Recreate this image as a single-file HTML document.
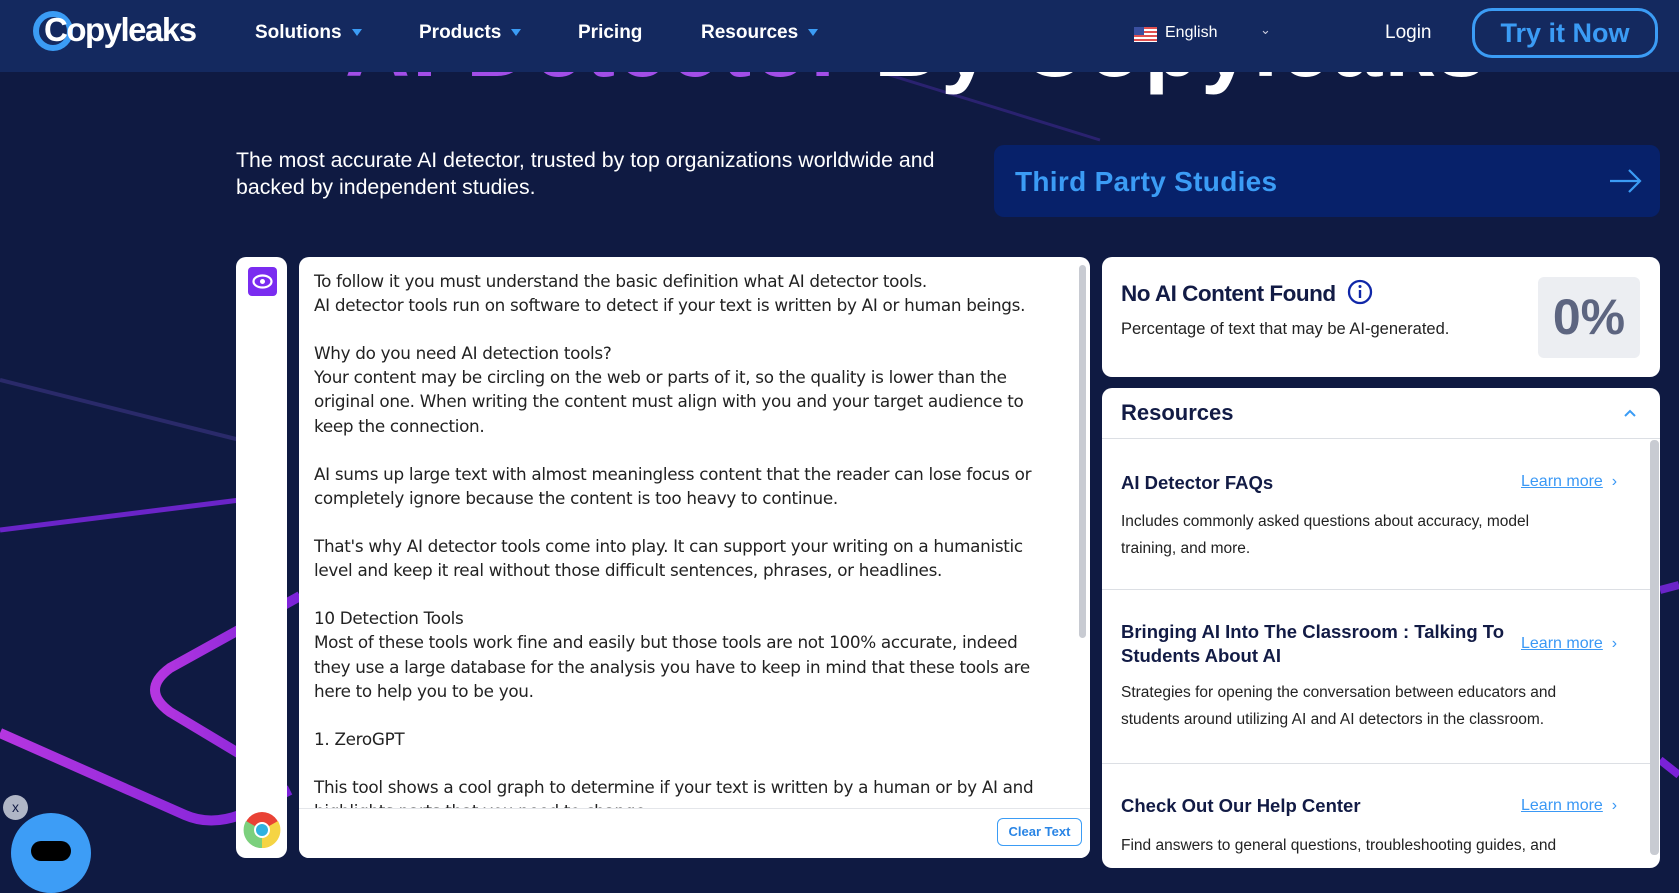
<!DOCTYPE html>
<html><head><meta charset="utf-8"><style>
*{margin:0;padding:0;box-sizing:border-box}
body{width:1679px;height:858px;overflow:hidden;background:#0f1a42;font-family:"Liberation Sans",sans-serif;position:relative}
.abs{position:absolute}
.hdr{left:0;top:0;width:1679px;height:72px;background:#14295f;z-index:5}
.nav{color:#fff;font-weight:bold;font-size:19px;top:22px}
.tri{display:inline-block;width:0;height:0;border-left:5px solid transparent;border-right:5px solid transparent;border-top:7px solid #3b9cf5;margin-left:10px;vertical-align:middle}
.card{background:#fff;border-radius:10px}
.ed{font-size:16.8px;line-height:24.1px;color:#222;white-space:pre-wrap;font-family:"DejaVu Sans","Liberation Sans",sans-serif;letter-spacing:-0.3px}
.rt{color:#121b45;font-weight:bold;font-size:18.5px}
.rd{color:#222;font-size:15.5px;line-height:26.5px}
.lm{color:#3a98f5;font-size:16px}
.lm u{text-decoration:underline}
</style></head><body>
<svg class="abs" style="left:0;top:0" width="1679" height="858">
<defs><linearGradient id="g" x1="0" x2="1"><stop offset="0" stop-color="#b536e0"/><stop offset="1" stop-color="#7a22d8"/></linearGradient></defs>
<path d="M0 733 L185 815 Q210 826 240 815 L290 790" stroke="url(#g)" stroke-width="10" fill="none"/>
<path d="M300 596 L170 668 Q140 690 170 712 L250 760" stroke="url(#g)" stroke-width="10" fill="none"/>
<path d="M0 380 L240 440" stroke="#2a2a6a" stroke-width="4" fill="none"/>
<path d="M0 530 L240 500" stroke="#6a24c8" stroke-width="5" fill="none"/>
<path d="M1660 590 L1679 585" stroke="#6a24c8" stroke-width="8"/>
<path d="M1660 760 L1679 775" stroke="#7a22d8" stroke-width="8"/>
<path d="M880 72 L1100 140" stroke="#2a2270" stroke-width="3"/>
</svg>
<div class="abs" style="left:345px;top:-4px;font-size:90px;line-height:100px;font-weight:bold;color:#fff;white-space:nowrap;letter-spacing:2px"><span style="color:#a24ee8">AI Detector</span> By Copyleaks</div>
<div class="abs hdr">
 <svg class="abs" style="left:32px;top:10px" width="46" height="42"><circle cx="21" cy="21" r="17" stroke="#3b9cf5" stroke-width="6" fill="none"/></svg>
 <div class="abs" style="left:44px;top:11px;font-size:33px;color:#fff;font-weight:bold;letter-spacing:-1.5px">Copyleaks</div>
 <div class="abs nav" style="left:255px">Solutions<span class="tri"></span></div>
 <div class="abs nav" style="left:419px">Products<span class="tri"></span></div>
 <div class="abs nav" style="left:578px">Pricing</div>
 <div class="abs nav" style="left:701px">Resources<span class="tri"></span></div>
 <div class="abs" style="left:1134px;top:27px;width:23px;height:15px;background:repeating-linear-gradient(#e05050 0 2px,#fff 2px 4px)"><div style="width:10px;height:8px;background:#3a4fa0"></div></div>
 <div class="abs" style="left:1165px;top:24px;color:#fff;font-size:16px">English</div>
 <div class="abs" style="left:1260px;top:22px;color:#ccd;font-size:13px">&#8964;</div>
 <div class="abs" style="left:1385px;top:22px;color:#fff;font-size:19px">Login</div>
 <div class="abs" style="left:1472px;top:8px;width:186px;height:50px;border:3px solid #3b9cf5;border-radius:20px;color:#3b9cf5;font-weight:bold;font-size:27px;text-align:center;line-height:44px">Try it Now</div>
</div>
<div class="abs" style="left:236px;top:147px;color:#fff;font-size:21.3px;line-height:27px">The most accurate AI detector, trusted by top organizations worldwide and<br>backed by independent studies.</div>
<div class="abs" style="left:994px;top:145px;width:666px;height:72px;background:#07216a;border-radius:10px">
 <div class="abs" style="left:21px;top:21px;color:#3b9cf5;font-weight:bold;font-size:28px;letter-spacing:0.3px">Third Party Studies</div>
 <svg class="abs" style="left:614px;top:22px" width="36" height="28"><path d="M2 14 H32 M21 3 L32 14 L21 25" stroke="#3b9cf5" stroke-width="2.2" fill="none"/></svg>
</div>
<div class="abs card" style="left:236px;top:257px;width:51px;height:601px">
 <div class="abs" style="left:12px;top:10px;width:29px;height:29px;background:#7a2cf0;border-radius:4px"><svg width="29" height="29"><ellipse cx="14.5" cy="14.5" rx="9" ry="6" stroke="#fff" stroke-width="2.2" fill="none"/><circle cx="14.5" cy="14.5" r="2.5" fill="#fff"/></svg></div>
 <svg class="abs" style="left:7px;top:554px" width="38" height="38"><circle cx="19" cy="19" r="18" fill="#e94235"/><path d="M19 19 L3 10 A18 18 0 0 0 19 37 Z" fill="#7bd07d"/><path d="M19 19 L19 37 A18 18 0 0 0 35 10 Z" fill="#f5d444"/><circle cx="19" cy="19" r="8" fill="#fff"/><circle cx="19" cy="19" r="6" fill="#2fb2e0"/></svg>
</div>
<div class="abs card" style="left:299px;top:257px;width:791px;height:601px;overflow:hidden">
 <div class="abs ed" style="left:15px;top:12px;width:750px">To follow it you must understand the basic definition what AI detector tools.
AI detector tools run on software to detect if your text is written by AI or human beings.

Why do you need AI detection tools?
Your content may be circling on the web or parts of it, so the quality is lower than the
original one. When writing the content must align with you and your target audience to
keep the connection.

AI sums up large text with almost meaningless content that the reader can lose focus or
completely ignore because the content is too heavy to continue.

That's why AI detector tools come into play. It can support your writing on a humanistic
level and keep it real without those difficult sentences, phrases, or headlines.

10 Detection Tools
Most of these tools work fine and easily but those tools are not 100% accurate, indeed
they use a large database for the analysis you have to keep in mind that these tools are
here to help you to be you.

1. ZeroGPT

This tool shows a cool graph to determine if your text is written by a human or by AI and
highlights parts that you need to change.</div>
 <div class="abs" style="left:780px;top:8px;width:7px;height:373px;background:#c8cbd2;border-radius:4px"></div>
 <div class="abs" style="left:0;top:551px;width:791px;height:50px;background:#fff;border-top:1px solid #e4e6ea"></div>
 <div class="abs" style="left:698px;top:561px;width:85px;height:28px;border:1.5px solid #3b9cf5;border-radius:6px;color:#2a85e5;font-size:13px;font-weight:bold;text-align:center;line-height:25px">Clear Text</div>
</div>
<div class="abs card" style="left:1102px;top:257px;width:558px;height:120px">
 <div class="abs" style="left:19px;top:22px;font-size:22.5px;font-weight:bold;color:#121b45;letter-spacing:-0.5px;white-space:nowrap">No AI Content Found <svg style="vertical-align:-4px;margin-left:6px" width="26" height="26"><circle cx="13" cy="13" r="11" stroke="#1027a8" stroke-width="2.3" fill="none"/><rect x="11.8" y="11" width="2.4" height="8" fill="#1027a8"/><circle cx="13" cy="7.5" r="1.5" fill="#1027a8"/></svg></div>
 <div class="abs" style="left:19px;top:63px;font-size:16.5px;color:#222">Percentage of text that may be AI-generated.</div>
 <div class="abs" style="left:436px;top:20px;width:102px;height:81px;background:#eceef2;border-radius:6px;color:#5d6580;font-weight:bold;font-size:50px;text-align:center;line-height:81px">0%</div>
</div>
<div class="abs card" style="left:1102px;top:388px;width:558px;height:480px;overflow:hidden">
 <div class="abs" style="left:19px;top:12px;font-size:22px;font-weight:bold;color:#121b45">Resources</div>
 <svg class="abs" style="left:521px;top:20px" width="14" height="10"><path d="M2 8 L7 3 L12 8" stroke="#3b9cf5" stroke-width="2" fill="none"/></svg>
 <div class="abs" style="left:0;top:50px;width:558px;height:1px;background:#dcdfe4"></div>
 <div class="abs" style="left:548px;top:52px;width:9px;height:415px;background:#c8cbd2;border-radius:4px"></div>
 <div class="abs rt" style="left:19px;top:84px">AI Detector FAQs</div>
 <div class="abs lm" style="left:419px;top:85px"><u>Learn more</u> &nbsp;&#8250;</div>
 <div class="abs rd" style="left:19px;top:121px">Includes commonly asked questions about accuracy, model<br>training, and more.</div>
 <div class="abs" style="left:0;top:201px;width:548px;height:1px;background:#dcdfe4"></div>
 <div class="abs rt" style="left:19px;top:232px;line-height:24px">Bringing AI Into The Classroom : Talking To<br>Students About AI</div>
 <div class="abs lm" style="left:419px;top:247px"><u>Learn more</u> &nbsp;&#8250;</div>
 <div class="abs rd" style="left:19px;top:292px">Strategies for opening the conversation between educators and<br>students around utilizing AI and AI detectors in the classroom.</div>
 <div class="abs" style="left:0;top:375px;width:548px;height:1px;background:#dcdfe4"></div>
 <div class="abs rt" style="left:19px;top:407px">Check Out Our Help Center</div>
 <div class="abs lm" style="left:419px;top:409px"><u>Learn more</u> &nbsp;&#8250;</div>
 <div class="abs rd" style="left:19px;top:445px">Find answers to general questions, troubleshooting guides, and</div>
</div>
<div class="abs" style="left:3px;top:795px;width:25px;height:25px;border-radius:50%;background:#b0b6c6;color:#121b45;font-size:14px;text-align:center;line-height:24px">x</div>
<div class="abs" style="left:11px;top:813px;width:80px;height:80px;border-radius:50%;background:#3d9df6"></div>
<div class="abs" style="left:31px;top:841px;width:40px;height:20px;border-radius:10px;background:#000"></div>
</body></html>
